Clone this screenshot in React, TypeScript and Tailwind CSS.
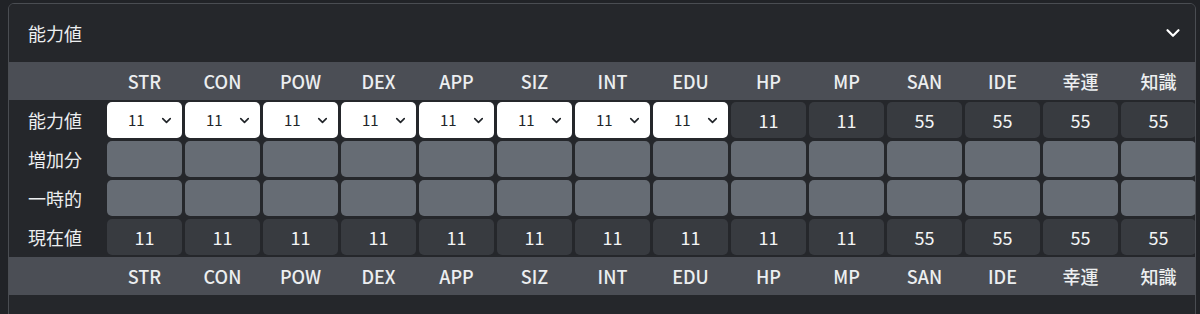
import { ChevronDown } from "lucide-react";

const stats = ["STR", "CON", "POW", "DEX", "APP", "SIZ", "INT", "EDU"];
const derived = [
  { key: "HP", value: 11 },
  { key: "MP", value: 11 },
  { key: "SAN", value: 55 },
  { key: "IDE", value: 55 },
  { key: "幸運", value: 55 },
  { key: "知識", value: 55 },
];
const columns = [...stats, ...derived.map((d) => d.key)];
const current = [11, 11, 11, 11, 11, 11, 11, 11, 11, 11, 55, 55, 55, 55];

const grid = "grid grid-cols-[95px_repeat(14,75px)] gap-x-[3px]";

function HeaderBand() {
  return (
    <div className={`${grid} h-[38px] items-center bg-[#4b4e55] text-[18px] font-medium text-[#eceef0]`}>
      <div />
      {columns.map((c) => (
        <div key={c} className="text-center">
          {c}
        </div>
      ))}
    </div>
  );
}

function StatSelect() {
  return (
    <div className="flex h-[36px] items-center rounded-[5px] bg-white pl-[20px] pr-[8px] text-[15px] text-[#212529]">
      <span className="flex-1 pl-[1px]">11</span>
      <ChevronDown size={15} strokeWidth={2.6} className="text-[#212529]" />
    </div>
  );
}

function Label({ children }: { children: string }) {
  return <div className="flex items-center pl-[19px] text-[18px] text-[#eceef0]">{children}</div>;
}

export default function App() {
  return (
    <div
      className="h-[314px] w-[1200px] overflow-hidden bg-[#212327] pl-[8px] pt-[3px]"
      style={{ fontFamily: '"Noto Sans CJK JP", "Noto Sans", sans-serif' }}
    >
      <div className="h-[330px] w-[1188px] overflow-hidden rounded-[6px] border border-[#4a4d52] bg-[#25272b]">
        <div className="flex h-[58px] items-center justify-between bg-[#25272b] pl-[19px] pr-[11px]">
          <span className="text-[18px] text-[#eceef0]">能力値</span>
          <ChevronDown size={22} strokeWidth={2.4} className="text-white" />
        </div>

        <HeaderBand />

        <div className="flex flex-col gap-y-[3px] py-[2px]">
          <div className={`${grid} h-[36px]`}>
            <Label>能力値</Label>
            {stats.map((s) => (
              <StatSelect key={s} />
            ))}
            {derived.map((d) => (
              <div
                key={d.key}
                className="flex items-center justify-center rounded-[5px] bg-[#383b40] text-[18px] text-[#f4f5f6]"
              >
                {d.value}
              </div>
            ))}
          </div>

          {["増加分", "一時的"].map((row) => (
            <div key={row} className={`${grid} h-[36px]`}>
              <Label>{row}</Label>
              {columns.map((c) => (
                <div key={c} className="rounded-[5px] bg-[#666c74]" />
              ))}
            </div>
          ))}

          <div className={`${grid} h-[36px]`}>
            <Label>現在値</Label>
            {current.map((v, i) => (
              <div
                key={i}
                className="flex items-center justify-center rounded-[5px] bg-[#383b40] text-[18px] text-[#f4f5f6]"
              >
                {v}
              </div>
            ))}
          </div>
        </div>

        <HeaderBand />
      </div>
    </div>
  );
}
